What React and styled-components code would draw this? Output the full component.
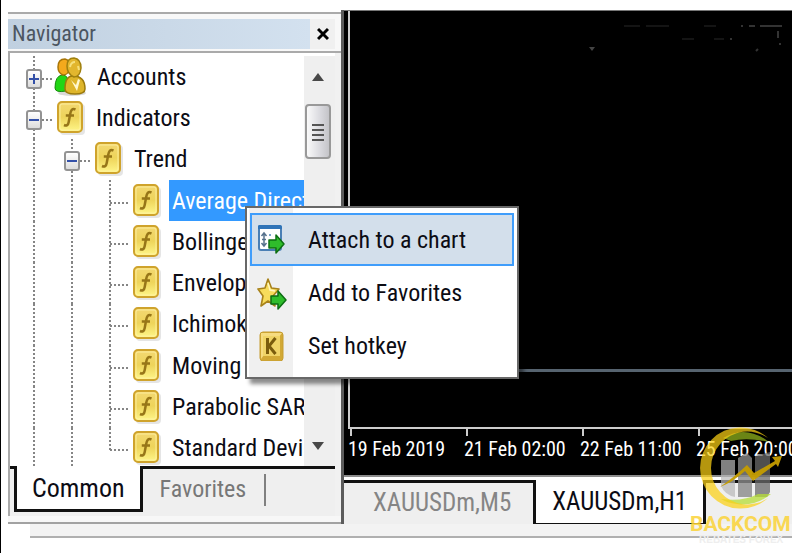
import React from "react";
import styled, { createGlobalStyle, css } from "styled-components";

const GlobalStyle = createGlobalStyle`
  *, *::before, *::after { box-sizing: border-box; }
  body {
    margin: 0;
    background: #fff;
    color: #0c0c14;
    font-family: "Roboto Condensed", "DejaVu Sans Condensed", Roboto, sans-serif;
    font-size: 24px;
    line-height: 28px;
  }
  button {
    font: inherit;
    color: inherit;
    background: none;
    border: 0;
    padding: 0;
    cursor: default;
  }
`;

const Page = styled.div`
  position: relative;
  display: flex;
  flex-direction: column;
  height: 100vh;
  min-height: 480px;
  padding: 10px 8px 0 7px;
  border-left: 1px solid #000;
  overflow: hidden;
`;

const Workspace = styled.div`
  flex: 1;
  min-height: 0;
  display: flex;
`;

/* Navigator */

const Navigator = styled.aside`
  flex: none;
  width: 336px;
  display: flex;
  flex-direction: column;
  padding-top: 2px;
  border-right: 3px solid #5c5c5c;
  background: linear-gradient(#fff 0 2px, #f1f1f1 2px);
`;

const NavHeader = styled.header`
  flex: none;
  display: flex;
  height: 41px;
  padding: 5px 6px 2px 0;
  border-top: 2px solid #aaa;
  border-bottom: 2px solid #aaa;
  background: #f8f8f8;
`;

const NavTitle = styled.h1`
  flex: 1;
  margin: 0;
  padding-left: 4px;
  font-size: 22px;
  font-weight: 400;
  line-height: 30px;
  color: #4c5661;
  background: linear-gradient(90deg, #c0d0e0, #d3e1ef);
`;

const CloseButton = styled.button`
  width: 25px;
  display: grid;
  place-items: center;
  background: #f0f0f0;
`;

const TreePane = styled.div`
  flex: 1;
  min-height: 0;
  display: flex;
  margin-right: 6px;
  padding-top: 3px;
  border-left: 2px solid #aaa;
  background: #fff;
`;

const Tree = styled.ul`
  flex: 1;
  min-width: 0;
  height: 413px;
  margin: 0;
  padding: 0 0 0 5px;
  list-style: none;
  display: grid;
  grid-template-rows: repeat(10, 1fr);
`;

const TreeViewport = styled.div`
  flex: 1;
  min-width: 0;
  display: flex;
  overflow: hidden;
`;

const TreeRow = styled.li`
  display: flex;
  align-items: center;
  min-width: 0;
  overflow: hidden;
`;

const dots = (direction) =>
  `repeating-linear-gradient(${direction}, #858585 0 2px, transparent 2px 4px)`;

const Guide = styled.span`
  flex: none;
  align-self: stretch;
  width: 38px;
  display: grid;
  place-items: center;
  background-repeat: no-repeat;
  background-image: ${dots("180deg")}, ${(p) => (p.$join ? dots("90deg") : "none")};
  background-position: 18px 0, 100% 55%;
  background-size: 2px ${(p) => (p.$last ? "55%" : "100%")}, 19px 2px;
`;

const Expander = styled.button`
  width: 16px;
  height: 20px;
  display: grid;
  place-items: center;
  margin-top: 4px;
  border: 2px solid #939393;
  border-radius: 3px;
  background: linear-gradient(#fff, #dcdcdc);
  color: #3350a8;
`;

const IconSlot = styled.span`
  flex: none;
  width: ${(p) => (p.$wide ? 34 : 30)}px;
  margin-left: ${(p) => (p.$wide ? 1 : 4)}px;
  display: flex;
`;

const TreeLabel = styled.span`
  flex: 1;
  align-self: stretch;
  display: flex;
  align-items: center;
  margin-left: 6px;
  padding-left: 3px;
  white-space: nowrap;
  overflow: hidden;
  ${(p) =>
    p.$selected &&
    css`
      background: #3399ff;
      color: #fff;
    `}
`;

const ScrollBar = styled.div`
  flex: none;
  width: 31px;
  display: flex;
  flex-direction: column;
  align-items: center;
  padding-right: 3px;
  background: #efefef;
`;

const ScrollButton = styled.button`
  flex: none;
  width: 28px;
  height: 40px;
  display: grid;
  place-items: center;
  margin-top: ${(p) => (p.$end ? "auto" : 0)};
`;

const ScrollThumb = styled.div`
  flex: none;
  width: 26px;
  height: 55px;
  margin-top: 8px;
  display: grid;
  place-items: center;
  border: 2px solid #999;
  border-radius: 4px;
  background: linear-gradient(90deg, #fafafa, #d9d9de 60%, #c4c4c8);
`;

const NavTabs = styled.div`
  flex: none;
  display: flex;
  align-items: flex-start;
  height: 50px;
  margin-right: 6px;
  border-left: 2px solid #aaa;
  background: linear-gradient(#111 0 3px, #efefef 3px);
`;

const NavTab = styled.button`
  height: 46px;
  margin-left: ${(p) => (p.$active ? 4 : 0)}px;
  padding: 0 18px 0 17px;
  color: ${(p) => (p.$active ? "inherit" : "#777")};
  ${(p) =>
    p.$active &&
    css`
      padding: 0 15px;
      border: solid #111;
      border-width: 0 3px 3px;
      background: #fff;
      font-size: 26px;
    `}
`;

const TabDivider = styled.span`
  width: 2px;
  height: 32px;
  margin-top: 8px;
  background: #808080;
`;

const NavBottom = styled.div`
  flex: none;
  height: 8px;
  border-bottom: 2px solid #a2a2a2;
  background: #f7f7f7;
`;

/* Chart */

const ChartColumn = styled.main`
  flex: 1;
  min-width: 0;
  display: flex;
  flex-direction: column;
`;

const ChartWindow = styled.section`
  flex: 1;
  min-height: 0;
  display: flex;
  flex-direction: column;
  padding-left: 4px;
  border-top: 1px solid #777;
  background: #000;
`;

const Plot = styled.div`
  position: relative;
  flex: 1;
  display: flex;
  flex-direction: column;
  justify-content: flex-end;
  border-left: 2px solid #ccc;
  border-bottom: 2px solid #ccc;
`;

const PriceLine = styled.div`
  height: 3px;
  margin-bottom: 55px;
  background: #56636f;
`;

const TickTrace = styled.svg`
  position: absolute;
  top: 12px;
  right: 8px;
`;

const TimeAxis = styled.div`
  flex: none;
  height: 46px;
  display: grid;
  grid-auto-flow: column;
  grid-auto-columns: 116px;
  overflow: hidden;
`;

const TimeLabel = styled.time`
  padding-top: 7px;
  font-size: 20px;
  line-height: 26px;
  white-space: nowrap;
  color: #fff;
  background: linear-gradient(#ccc, #ccc) 2px 0 / 2px 7px no-repeat;
`;

const ChartTabs = styled.div`
  flex: none;
  display: flex;
  height: 49px;
  padding-top: 3px;
  border-top: 2px solid #8c8c8c;
  background: linear-gradient(#fff 0 3px, #111 3px 6px, #efefef 6px);
`;

const ChartTab = styled.button`
  height: 46px;
  padding: 0 22px 0 29px;
  font-size: 25px;
  color: #858585;
  ${(p) =>
    p.$active &&
    css`
      padding: 0 16px;
      border: solid #111;
      border-width: 0 3px 3px;
      background: #fff;
      color: #0c0c14;
    `}
`;

const StatusEdge = styled.footer`
  flex: none;
  height: 14px;
  margin-left: 22px;
  border-bottom: 2px solid #b0b0b0;
  background: #f3f3f3;
`;

const BottomSpace = styled.div`
  flex: none;
  height: 15px;
`;

/* Context menu */

const Menu = styled.div`
  position: absolute;
  left: 244px;
  top: 206px;
  width: 274px;
  display: flex;
  flex-direction: column;
  padding: 5px 3px;
  border: 2px solid #686868;
  background: linear-gradient(90deg, #fff 0 2px, #f0f0f0 2px 46px, #fff 46px);
  box-shadow: 5px 5px 4px rgba(0, 0, 0, 0.45);
`;

const MenuItem = styled.button`
  display: flex;
  align-items: center;
  height: 53px;
  padding-left: 5px;
  border: 2px solid ${(p) => (p.$active ? "#3f9dfb" : "transparent")};
  background: ${(p) => (p.$active ? "#d3dfeb" : "none")};
  text-align: left;
`;

const MenuIcon = styled.span`
  flex: none;
  width: 51px;
  display: flex;
`;

const Watermark = styled.svg`
  position: absolute;
  right: 0;
  bottom: 3px;
`;

/* Drawings */

function FunctionIcon() {
  return (
    <svg width="30" height="36" viewBox="0 0 30 36" aria-hidden="true">
      <defs>
        <linearGradient id="fn" x1="0" y1="0" x2="0" y2="1">
          <stop offset="0" stopColor="#f3d873" />
          <stop offset="0.5" stopColor="#eed45a" />
          <stop offset="1" stopColor="#fff78a" />
        </linearGradient>
      </defs>
      <rect x="3" y="4" width="25" height="31" rx="4" fill="#000" opacity="0.1" />
      <rect x="1" y="2" width="24" height="30" rx="4" fill="url(#fn)" stroke="#cfa32c" strokeWidth="2" />
      <rect x="3" y="4" width="20" height="26" rx="2" fill="none" stroke="#fff3a8" strokeWidth="1" opacity="0.8" />
      <path d="M18.500 9.500C15 8 13.800 10.500 13.200 14L11.700 22C11.200 25.200 9.500 26.200 7 25M8.800 15.500H17" fill="none" stroke="#977618" strokeWidth="2.500" />
    </svg>
  );
}

function AccountsIcon() {
  return (
    <svg width="34" height="40" viewBox="0 0 34 40" aria-hidden="true">
      <ellipse cx="18" cy="36" rx="14" ry="3" fill="#000" opacity="0.15" />
      <path d="M1 31Q1 19 8 18Q15 18 14 27L12 34Q1 36 1 31Z" fill="#22d615" stroke="#168a0e" />
      <path d="M4 10Q4 2 11 2Q16 3 16 10Q15 18 9 18Q4 16 4 10Z" fill="#f4a91c" stroke="#a87508" strokeWidth="1.500" />
      <path d="M11 32Q11 19 19 19Q31 19 31 32Q31 37 21 37Q11 37 11 32Z" fill="#deb52a" stroke="#9c7a0c" strokeWidth="1.500" />
      <path d="M13 9Q13 1 20 1Q27 2 27 11Q26 20 20 20Q13 17 13 9Z" fill="#e2b62e" stroke="#a0800f" strokeWidth="1.500" />
      <path d="M16 10Q17 5 21 5M24 9L25 13" stroke="#f6e07c" strokeWidth="2" fill="none" />
      <path d="M17 23L23 34L26 23L24 22L22 28Z" fill="#fff8cf" />
    </svg>
  );
}

function GreenArrow({ x, y }) {
  return (
    <path
      transform={`translate(${x} ${y})`}
      d="M1 6H8V1L16 10L8 19V14H1Z"
      fill="#2fbd2b"
      stroke="#0c6e12"
      strokeWidth="1.500"
      strokeLinejoin="round"
    />
  );
}

function AttachIcon() {
  return (
    <svg width="30" height="34" viewBox="0 0 30 34" aria-hidden="true">
      <rect x="2" y="3" width="22" height="24" rx="2" fill="#fff" stroke="#4a7fb5" strokeWidth="2" />
      <path d="M1 3Q1 2 3 2H23Q25 2 25 4V6H1Z" fill="#2f74b8" />
      <path d="M7 10V23M4.500 13L7 10L9.500 13M4.500 20L7 23L9.500 20M5 16.500H9" stroke="#56718c" strokeWidth="1.500" fill="none" />
      <path d="M12 12H14M12 18H14" stroke="#7aa3c9" strokeWidth="2" />
      <GreenArrow x={11} y={11} />
    </svg>
  );
}

function FavoriteIcon() {
  return (
    <svg width="32" height="34" viewBox="0 0 32 34" aria-hidden="true">
      <path d="M11 3L14.500 12L22 13L16 20L18 30L11 25L4 30L6 20L1 13L8 12Z" fill="#f7dc5c" stroke="#a8821b" strokeWidth="1.600" strokeLinejoin="round" />
      <path d="M11 7L13 14L18 15" stroke="#fff6bd" strokeWidth="1.500" fill="none" />
      <GreenArrow x={13} y={14} />
    </svg>
  );
}

function HotkeyIcon() {
  return (
    <svg width="28" height="30" viewBox="0 0 28 30" aria-hidden="true">
      <rect x="3" y="1" width="23" height="29" rx="3" fill="#d2a935" stroke="#c69d30" />
      <path d="M4 2H25L22 6H7V24L4 28Z" fill="#f6dc80" />
      <rect x="6" y="5" width="17" height="20" fill="#f0d467" />
      <path d="M10.500 7V23M18.500 7L12 15L18.500 23" fill="none" stroke="#7a5c0d" strokeWidth="3" />
    </svg>
  );
}

function Triangle({ down }) {
  return (
    <svg width="14" height="9" viewBox="0 0 14 9" aria-hidden="true">
      <path d={down ? "M1 0H13L7 8Z" : "M1 9H13L7 1Z"} fill="#484848" />
    </svg>
  );
}

function BackcomLogo() {
  return (
    <Watermark width="115" height="130" viewBox="0 0 115 130" role="img" aria-label="Backcom">
      <path d="M36 40H50V77Q40 75 36 66Z" opacity="0.700" fill="#b8b8b8" />
      <path d="M53 38L62 33L67 38V77H53Z" opacity="0.800" fill="#8a8a8a" />
      <path d="M70 36L85 32V72L82 77H70Z" opacity="0.750" fill="#6a6a6a" />
      <path d="M38 18Q61 4 84 22Q62 17 46 21Z" fill="#a4cc20" opacity="0.650" />
      <path d="M36 79Q58 82 73 74L86 74Q70 87 52 84Q42 83 36 79Z" fill="#b5dd35" opacity="0.750" />
      <path d="M83 18A40.600 40.600 0 1 0 83 78A36.400 36.400 0 1 1 83 18Z" fill="#fbd014" opacity="0.720" />
      <path d="M35 67Q48 58 62 45L69 53L90 41L87 37L97 36L93 47L91 44L68 61L60 51Q48 62 35 67Z" fill="#c49c00" opacity="0.950" />
      <text x="5" y="111" fontFamily="Roboto, sans-serif" fontSize="21" fontWeight="700" fill="#fbd338" opacity="0.850">
        BACKCOM
      </text>
      <text x="14" y="123" fontFamily='"Liberation Sans", sans-serif' fontSize="10" fontWeight="700" fill="#eeeeee">
        REBATES FOREX
      </text>
    </Watermark>
  );
}

const rows = [
  { label: "Accounts", depth: 0, state: "closed", icon: "accounts" },
  { label: "Indicators", depth: 0, state: "open" },
  { label: "Trend", depth: 1, state: "open" },
  { label: "Average Directional", depth: 2, selected: true },
  { label: "Bollinger Bands", depth: 2 },
  { label: "Envelopes", depth: 2 },
  { label: "Ichimoku Kinko", depth: 2 },
  { label: "Moving Average", depth: 2 },
  { label: "Parabolic SAR", depth: 2 },
  { label: "Standard Deviation", depth: 2, last: true },
];

const menuItems = [
  { label: "Attach to a chart", Icon: AttachIcon, active: true },
  { label: "Add to Favorites", Icon: FavoriteIcon },
  { label: "Set hotkey", Icon: HotkeyIcon },
];

const times = ["19 Feb 2019", "21 Feb 02:00", "22 Feb 11:00", "25 Feb 20:00"];

function NavigatorRow({ row }) {
  const accounts = row.icon === "accounts";
  return (
    <TreeRow role="treeitem" aria-level={row.depth + 1} aria-selected={!!row.selected}>
      {Array.from({ length: row.depth }, (_, i) => (
        <Guide key={i} />
      ))}
      <Guide $join $last={row.last}>
        {row.state && (
          <Expander aria-label={(row.state === "open" ? "Collapse " : "Expand ") + row.label}>
            <svg width="10" height="12" viewBox="0 0 10 12" aria-hidden="true">
              <path d={row.state === "open" ? "M0 6H10" : "M0 6H10M5 1V11"} stroke="currentColor" strokeWidth="2" />
            </svg>
          </Expander>
        )}
      </Guide>
      <IconSlot $wide={accounts}>{accounts ? <AccountsIcon /> : <FunctionIcon />}</IconSlot>
      <TreeLabel $selected={row.selected}>{row.label}</TreeLabel>
    </TreeRow>
  );
}

export default function App() {
  return (
    <Page>
      <GlobalStyle />
      <Workspace>
        <Navigator>
          <NavHeader>
            <NavTitle>Navigator</NavTitle>
            <CloseButton aria-label="Close">
              <svg width="12" height="14" viewBox="0 0 12 14" aria-hidden="true">
                <path d="M1 2L11 12M11 2L1 12" stroke="#000" strokeWidth="3" />
              </svg>
            </CloseButton>
          </NavHeader>
          <TreePane>
            <TreeViewport>
              <Tree role="tree" aria-label="Navigator">
                {rows.map((row) => (
                  <NavigatorRow key={row.label} row={row} />
                ))}
              </Tree>
            </TreeViewport>
            <ScrollBar>
              <ScrollButton aria-label="Scroll up">
                <Triangle />
              </ScrollButton>
              <ScrollThumb>
                <svg width="14" height="20" viewBox="0 0 14 20" aria-hidden="true">
                  <path d="M1 3H13M1 8H13M1 13H13M1 18H13" stroke="#555" strokeWidth="2" />
                </svg>
              </ScrollThumb>
              <ScrollButton $end aria-label="Scroll down">
                <Triangle down />
              </ScrollButton>
            </ScrollBar>
          </TreePane>
          <NavTabs role="tablist">
            <NavTab role="tab" aria-selected="true" $active>
              Common
            </NavTab>
            <NavTab role="tab" aria-selected="false">
              Favorites
            </NavTab>
            <TabDivider />
          </NavTabs>
          <NavBottom />
        </Navigator>
        <ChartColumn>
          <ChartWindow aria-label="Chart">
            <Plot>
              <TickTrace width="210" height="30" viewBox="0 0 210 30" aria-hidden="true">
                <path d="M50 3H66M72 3H95M130 3H142M108 16H120M140 16H150" stroke="#141414" strokeWidth="2" />
                <path d="M167 3H169M175 3H181M186 3H208M204 8V15M206 20V22M182 28L184 26M156 16H158" stroke="#333" strokeWidth="2" />
                <path d="M15 24H21L18 28Z" fill="#444" />
              </TickTrace>
              <PriceLine />
            </Plot>
            <TimeAxis>
              {times.map((time) => (
                <TimeLabel key={time}>{time}</TimeLabel>
              ))}
            </TimeAxis>
          </ChartWindow>
          <ChartTabs role="tablist">
            <ChartTab role="tab" aria-selected="false">
              XAUUSDm,M5
            </ChartTab>
            <ChartTab role="tab" aria-selected="true" $active>
              XAUUSDm,H1
            </ChartTab>
          </ChartTabs>
        </ChartColumn>
      </Workspace>
      <StatusEdge />
      <BottomSpace />
      <Menu role="menu">
        {menuItems.map(({ label, Icon, active }) => (
          <MenuItem key={label} role="menuitem" $active={active}>
            <MenuIcon>
              <Icon />
            </MenuIcon>
            {label}
          </MenuItem>
        ))}
      </Menu>
      <BackcomLogo />
    </Page>
  );
}
